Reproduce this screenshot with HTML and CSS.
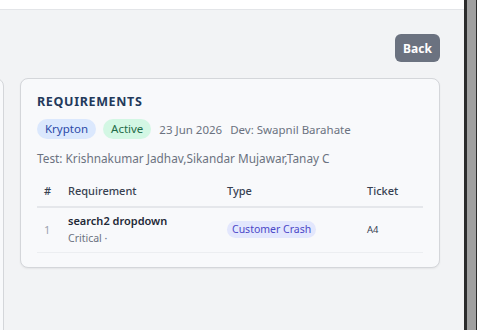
FILE: index.html
```html
<!DOCTYPE html>
<html>
<head>
<meta charset="utf-8">
<link rel="stylesheet" href="styles.css">
</head>
<body>
<div class="app">
  <div class="page">
    <div class="topbar"></div>
    <div class="content">
      <div class="toolbar">
        <button class="btn-back">Back</button>
      </div>
      <div class="cards">
        <div class="side-card"></div>
        <div class="req-card">
          <h2 class="req-title">REQUIREMENTS</h2>
          <div class="meta">
            <span class="pill pill-blue">Krypton</span>
            <span class="pill pill-green">Active</span>
            <span class="meta-text">23 Jun 2026</span>
            <span class="meta-text">Dev: Swapnil Barahate</span>
          </div>
          <div class="testers">Test: Krishnakumar Jadhav,Sikandar Mujawar,Tanay C</div>
          <table class="req-table">
            <thead>
              <tr>
                <th class="c-num">#</th>
                <th class="c-req">Requirement</th>
                <th class="c-type">Type</th>
                <th class="c-ticket">Ticket</th>
              </tr>
            </thead>
            <tbody>
              <tr>
                <td class="c-num num">1</td>
                <td class="c-req">
                  <div class="req-name">search2 dropdown</div>
                  <div class="req-sub">Critical ·</div>
                </td>
                <td class="c-type"><span class="pill pill-indigo">Customer Crash</span></td>
                <td class="c-ticket ticket">A4</td>
              </tr>
            </tbody>
          </table>
        </div>
      </div>
    </div>
  </div>
  <div class="frame"></div>
</div>
</body>
</html>
```

FILE: styles.css
```css
* { box-sizing: border-box; }
html, body { margin: 0; padding: 0; height: 100%; }
body {
  font-family: "Noto Sans", "Open Sans", sans-serif;
  color: #374151;
  background: #f3f4f6;
  overflow: hidden;
}
.app {
  display: flex;
  height: 330px;
  overflow: hidden;
}
.page {
  width: 464px;
  flex: none;
  display: flex;
  flex-direction: column;
  background: #f2f3f5;
  overflow: hidden;
}
.topbar {
  height: 10px;
  flex: none;
  background: #ffffff;
  border-bottom: 1px solid #e3e5e8;
}
.content {
  flex: 1;
  min-height: 0;
  padding: 24px 24px 0 0;
  display: flex;
  flex-direction: column;
}
.toolbar {
  display: flex;
  justify-content: flex-end;
  height: 28px;
  flex: none;
}
.btn-back {
  width: 45px;
  height: 28px;
  border: 0;
  border-radius: 6px;
  background: #6b7280;
  color: #ffffff;
  font-family: inherit;
  font-size: 12px;
  font-weight: 700;
  padding: 0;
}
.cards {
  margin-top: 16px;
  display: flex;
  gap: 16px;
  flex: 1;
  min-height: 0;
  align-items: flex-start;
}
.side-card {
  width: 200px;
  margin-left: -196px;
  flex: none;
  align-self: stretch;
  margin-bottom: -20px;
  border: 1px solid #d4d6da;
  border-radius: 8px;
  background: #f8f9fb;
}
.req-card {
  flex: 1;
  background: #f8f9fb;
  border: 1px solid #d4d6da;
  border-radius: 8px;
  box-shadow: 0 1px 2px rgba(0,0,0,0.06);
  padding: 14px 16px 14px 16px;
}
.req-title {
  margin: 0;
  font-size: 12.5px;
  font-weight: 700;
  letter-spacing: 0.65px;
  color: #23395b;
  line-height: 18px;
}
.meta {
  margin-top: 8px;
  display: flex;
  align-items: center;
  gap: 7px;
  font-size: 11.5px;
}
.pill {
  display: inline-block;
  border-radius: 999px;
  padding: 2px 8px;
  font-size: 11.5px;
  line-height: 16px;
}
.pill-blue { background: #dbe8fd; color: #2b4aa8; }
.pill-green { background: #d3f7e4; color: #1f6b48; }
.pill-indigo { background: #e3e7fd; color: #4b48c8; font-size: 10.5px; line-height: 13px; padding: 2px 5px; }
.meta-text { color: #6b7280; margin-left: 1px; }
.testers {
  margin-top: 11px;
  font-size: 11.8px;
  color: #6b7280;
  line-height: 16px;
}
.req-table {
  margin-top: 11px;
  width: 100%;
  border-collapse: collapse;
  font-size: 11px;
}
.req-table th {
  text-align: left;
  font-weight: 500;
  color: #374151;
  padding: 6px 7px 7px;
  border-bottom: 2px solid #e5e7eb;
  line-height: 16px;
}
.req-table td {
  padding: 5px 7px 6px;
  border-bottom: 1px solid #eceef1;
  vertical-align: middle;
}
.c-num { width: 24px; }
.c-req { width: 159px; }
.c-type { width: 140px; }
.num { color: #9ca3af; }
.req-name { font-weight: 600; color: #1f2937; font-size: 11px; line-height: 16px; }
.req-sub { font-size: 10.5px; color: #6b7280; line-height: 16px; margin-top: 1px; }
.ticket { font-size: 9.5px; color: #374151; }
.frame {
  flex: 1;
  background: #a0a0a0;
  border-left: 3px solid #2b2b2b;
  border-right: 1px solid #2b2b2b;
}
```
